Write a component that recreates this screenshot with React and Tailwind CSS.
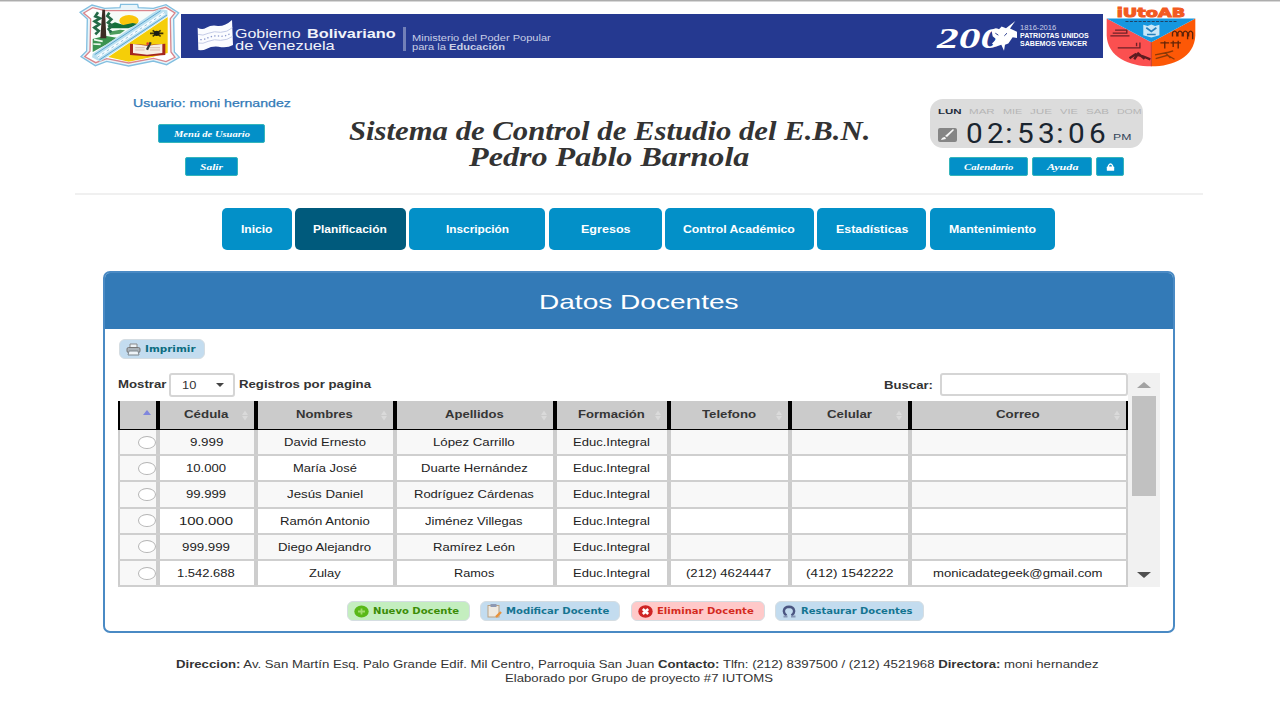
import React, { useLayoutEffect, useRef, useState } from "react";

function Fit({ w, className = "", children }) {
  const ref = useRef(null);
  const [scale, setScale] = useState(1);
  useLayoutEffect(() => {
    if (ref.current && ref.current.offsetWidth) setScale(w / ref.current.offsetWidth);
  }, [w]);
  return (
    <span className={"block shrink-0 whitespace-nowrap text-left " + className} style={{ width: w }}>
      <span ref={ref} className="inline-block origin-left" style={{ transform: `scaleX(${scale})` }}>
        {children}
      </span>
    </span>
  );
}

const Crest = () => (
  <svg className="h-[64px] w-[101px] shrink-0" viewBox="27 8 303 192" preserveAspectRatio="none">
    <path d="M30 36 L66 14 L104 24 L150 22 L152 12 L203 12 L205 22 L250 24 L288 13 L326 38 L311 56 L313 155 L328 171 L290 193 L250 182 L176 197 L110 183 L76 196 L33 169 L50 152 L52 56 Z" fill="#e9f5fa" stroke="#83bfe0" strokeWidth="4" />
    <path d="M41 38 L68 22 L105 31 L250 31 L287 21 L315 38 L301 55 L303 155 L315 171 L288 184 L250 174 L176 188 L110 175 L77 187 L44 169 L60 153 L62 56 Z" fill="#fff" stroke="#d9868c" strokeWidth="4" />
    <path d="M68 35 H268 L68 157 Z" fill="#f7fcf9" />
    <ellipse cx="177" cy="61" rx="29" ry="17" fill="#fbc60b" />
    <path d="M112 76 L135 66 L160 74 L188 68 L206 72 L175 84 L118 84 Z" fill="#14703a" />
    <path d="M68 116 L105 106 L140 112 L110 132 L68 155 Z" fill="#3b9350" />
    <path d="M116 94 L150 88 L165 90 L150 100 L120 104 Z" fill="#4d9d5c" />
    <path d="M72 118 L98 123 M70 131 L92 132" stroke="#effaf0" strokeWidth="5" />
    <path d="M84 36 L76 48 L90 54 L74 63 L88 72 L73 82 L86 92 L76 102 M118 37 L112 47 L124 57 L114 67 L126 76 L116 86 L124 96" stroke="#246a47" strokeWidth="8" fill="none" />
    <path d="M97 28 L105 28 L109 114 H91 Z" fill="#3c2b25" />
    <path d="M293 50 V158 L250 169 L176 184 L115 170 Z" fill="#f5ce08" />
    <path d="M68 160 L266 26 L292 30 L293 48 L90 184 L66 171 Z" fill="#b9dfef" />
    <path d="M74 163 L272 31 M88 179 L291 44" stroke="#5ca5d0" strokeWidth="3" />
    <path d="M82 171 L283 38" stroke="#f4fbff" strokeWidth="9" />
    <path d="M82 171 L283 38" stroke="#6aa7cb" strokeWidth="2" strokeDasharray="8 9" />
    <path d="M240 99 L280 99 M248 90 L272 108 M272 90 L248 108" stroke="#3a3108" strokeWidth="5" />
    <circle cx="260" cy="99" r="8" fill="#1b1b16" />
    <path d="M180 130 L232 134 L286 130 V164 L232 168 L180 164 Z" fill="#a4271d" />
    <path d="M189 131 L231 136 L277 131 V158 L231 163 L189 158 Z" fill="#f7efe4" />
    <path d="M196 142 H224 M196 149 H224 M240 142 H270 M240 149 H270" stroke="#cfa89b" strokeWidth="2" />
    <path d="M242 126 L231 148" stroke="#333" strokeWidth="7" />
    <circle cx="233" cy="130" r="4" fill="#e13d2f" />
  </svg>
);

const College = () => (
  <svg className="h-[62px] w-[90px] shrink-0" viewBox="620 15 268 185" preserveAspectRatio="none">
    <text x="652" y="50" textLength="204" lengthAdjust="spacingAndGlyphs" fontFamily="DejaVu Sans" fontWeight="900" fontSize="39" fill="#f25a22" stroke="#f25a22" strokeWidth="3">iUtoAB</text>
    <path d="M622 55 L755 126 V198 C690 198 624 170 622 105 Z" fill="#fb5050" />
    <path d="M886 55 L755 126 V198 C820 198 884 170 886 105 Z" fill="#fd5806" />
    <path d="M622 55 H886 L755 126 Z" fill="#1597df" />
    <path d="M755 126 V198" stroke="#c33d2c" strokeWidth="3" />
    <path d="M678 64 H830" stroke="#1e4365" strokeWidth="3" strokeDasharray="9 4" />
    <path d="M731 74 L744 78 L755 73 L766 78 L779 74 V105 L755 112 L731 105 Z" fill="#c9e7f7" />
    <path d="M740 83 L755 94 L770 83 M742 103 H768" fill="none" stroke="#2481bd" strokeWidth="5" />
    <path d="M633 107 H690 M640 99 H682 V90 H647 M655 143 H721 V127 M711 138 V128" fill="none" stroke="#6d2127" strokeWidth="4" />
    <path d="M690 174 L708 162 L730 168 L752 177 M704 177 L716 160 L735 176" fill="none" stroke="#5c1b20" strokeWidth="7" />
    <path d="M818 109 V98 Q824 88 831 98 V109 M834 109 V98 Q840 88 847 98 V109 M850 109 V98 Q856 88 863 98 V117 M866 109 V98 Q872 88 878 98 V117" fill="none" stroke="#5c2208" strokeWidth="4" />
    <path d="M782 128 H808 M795 123 V145 M812 128 H843 M820 122 V140 M835 122 V145" stroke="#642507" strokeWidth="4" />
    <path d="M766 164 L806 156 L820 152 M768 175 L803 165 L824 177 M796 157 L812 173" fill="none" stroke="#8c3907" strokeWidth="4" />
  </svg>
);

const Flag = () => (
  <svg className="h-[32px] w-[36px] shrink-0" viewBox="380 58 110 96" preserveAspectRatio="none">
    <path d="M382 84 Q396 92 408 84 Q426 74 444 79 Q466 80 487 61 L490 136 Q472 146 446 141 Q424 139 410 147 Q398 153 384 151 Z" fill="#fbfcff" />
    <path d="M383 104 Q398 110 414 101 Q434 93 452 98 Q472 98 488 84 M383 130 Q398 134 414 125 Q434 117 452 122 Q472 122 489 110" fill="none" stroke="#c3cae6" strokeWidth="3" />
    <path d="M390 120 Q404 120 414 114 Q434 106 452 110 Q468 110 483 101" fill="none" stroke="#8b98cb" strokeWidth="4" strokeDasharray="4 7" />
  </svg>
);

const Horse = () => (
  <svg className="absolute left-[54px] top-[1px] h-[31px] w-[26px]" viewBox="274 58 78 94" preserveAspectRatio="none">
    <path d="M276 91 Q284 78 298 86 L306 78 L319 83 L347 61 L331 84 L352 94 L354 113 L339 110 L326 129 L316 133 L313 151 L305 133 L288 139 L277 129 L290 116 L279 107 Z" fill="#fff" />
    <path d="M287 98 L296 104 M322 98 L314 106" stroke="#26398c" strokeWidth="3" />
  </svg>
);

const MiniButton = ({ box, w, children }) => (
  <button className={"flex h-[19px] items-center justify-center rounded-[2px] border border-[#35b5bb] bg-[#0390c8] font-['Liberation_Serif',serif] text-[9px] font-bold italic leading-[10px] text-white " + box}>
    {w ? <Fit w={w}>{children}</Fit> : children}
  </button>
);

const days = [["MAR", 26], ["MIE", 19], ["JUE", 22], ["VIE", 18], ["SAB", 23], ["DOM", 25]];

const Clock = () => (
  <div className="h-[49px] w-[213px] overflow-hidden rounded-[13px] bg-[#dcdcdc] pl-[8px] pt-[7px]">
    <div className="flex h-[11px] w-[205px] gap-[8px] text-[8px] leading-[11px]">
      <Fit w={23} className="font-bold text-[#1f2d3d]">LUN</Fit>
      {days.map(([d, w]) => (
        <Fit key={d} w={w} className="text-[#b5b5b5]">{d}</Fit>
      ))}
    </div>
    <div className="mt-[4px] flex h-[24px] items-center">
      <svg className="mt-[4px] h-[14px] w-[19px] shrink-0" viewBox="0 0 19 14">
        <rect width="19" height="14" rx="2" fill="#858585" />
        <path d="M16 2 L9 9 L7 8 L15 1 Z M7 9 L8 11 L3 12 Q4 9 7 9Z" fill="#f7f7f7" />
      </svg>
      <div className="ml-[9px] flex h-[26px] items-center font-['Roboto',sans-serif] text-[28px] leading-[33px] text-[#1a2530]">
        <Fit w={17}>0</Fit>
        <Fit w={17} className="ml-[4px]">2</Fit>
        <Fit w={8} className="ml-[1px]">:</Fit>
        <Fit w={17} className="ml-[4px]">5</Fit>
        <Fit w={17} className="ml-[4px]">3</Fit>
        <Fit w={8} className="ml-[1px]">:</Fit>
        <Fit w={17} className="ml-[4px]">0</Fit>
        <Fit w={17} className="ml-[4px]">6</Fit>
      </div>
      <Fit w={19} className="ml-[7px] mt-[7px] text-[9px] leading-[12px] text-[#34465a]">PM</Fit>
    </div>
  </div>
);

const nav = [
  ["Inicio", 31, "w-[70px]"],
  ["Planificación", 74, "w-[111px]"],
  ["Inscripción", 63, "w-[136px]"],
  ["Egresos", 49, "w-[113px]"],
  ["Control Académico", 112, "w-[149px]"],
  ["Estadísticas", 72, "w-[109px]"],
  ["Mantenimiento", 87, "w-[125px]"],
];

const heads = [["Cédula", 44], ["Nombres", 57], ["Apellidos", 59], ["Formación", 67], ["Telefono", 54], ["Celular", 45], ["Correo", 44]];

const rows = [
  [["9.999", 33], ["David Ernesto", 82], ["López Carrillo", 82], ["Educ.Integral", 77]],
  [["10.000", 40], ["María José", 64], ["Duarte Hernández", 107], ["Educ.Integral", 77]],
  [["99.999", 40], ["Jesús Daniel", 76], ["Rodríguez Cárdenas", 120], ["Educ.Integral", 77]],
  [["100.000", 54], ["Ramón Antonio", 90], ["Jiménez Villegas", 98], ["Educ.Integral", 77]],
  [["999.999", 48], ["Diego Alejandro", 93], ["Ramírez León", 82], ["Educ.Integral", 77]],
  [["1.542.688", 58], ["Zulay", 32], ["Ramos", 40], ["Educ.Integral", 77], ["(212) 4624447", 85], ["(412) 1542222", 87], ["monicadategeek@gmail.com", 170]],
];

const grid = "grid grid-cols-[42px_98px_139px_160px_114px_121px_120px_216px]";

const Sorter = () => (
  <svg className="absolute right-[5px] top-[9px] h-[11px] w-[8px]" viewBox="0 0 8 11">
    <path d="M4 0.5 L7 5 H1 Z M4 10.5 L7 6 H1 Z" fill="#dadada" />
  </svg>
);

const Table = () => (
  <div className="w-[1010px]">
    <div className={grid + " h-[29px] border-b border-black bg-[#cbcbcb]"}>
      <div className="flex justify-end border-l-2 border-r-4 border-black pr-[5px] pt-[9px]">
        <svg className="h-[5px] w-[8px]" viewBox="0 0 8 5"><path d="M4 0 L8 5 H0Z" fill="#7f86dd" /></svg>
      </div>
      {heads.map(([t, w], i) => (
        <div key={t} className={"relative flex justify-center border-black pr-[2px] pt-[6px] text-[11.5px] font-bold leading-[14px] text-[#353535] " + (i === 6 ? "border-r-2" : "border-r-4")}>
          <Fit w={w}>{t}</Fit>
          <Sorter />
        </div>
      ))}
    </div>
    {rows.map((r, n) => (
      <div key={n} className={grid + " h-[26.2px] border-b-2 border-[#cfcfcf] " + (n % 2 ? "bg-white" : "bg-[#f8f8f8]")}>
        <div className="flex items-center justify-end border-l-2 border-r-4 border-[#cdcdcd] bg-[#f8f8f8]">
          <span className="h-[13px] w-[18px] rounded-[50%] border border-[#b5b5b5] bg-white" />
        </div>
        {heads.map((h, i) => (
          <div key={h[0]} className={"flex items-center justify-center border-[#cdcdcd] pr-[2px] text-[10.5px] leading-[14px] text-[#222] " + (i === 6 ? "border-r-2" : "border-r-4")}>
            {r[i] && <Fit w={r[i][1]}>{r[i][0]}</Fit>}
          </div>
        ))}
      </div>
    ))}
  </div>
);

const icons = {
  print: (
    <svg className="h-[13px] w-[15px] shrink-0" viewBox="0 0 15 13">
      <path d="M4 5 V1 H11 V5" fill="#edf3f6" stroke="#8b8b8b" />
      <rect x="1" y="4.5" width="13" height="5" rx="1.5" fill="#aab2b8" stroke="#777" />
      <path d="M3 8 H12 L13 12 H2 Z" fill="#eef4f8" stroke="#7d868d" />
    </svg>
  ),
  add: (
    <svg className="h-[13px] w-[15px] shrink-0" viewBox="0 0 15 13" preserveAspectRatio="none">
      <ellipse cx="7.5" cy="6.5" rx="7.2" ry="6" fill="#59b817" />
      <path d="M7.5 3.5 V9.5 M4 6.5 H11" stroke="#9fdc6c" strokeWidth="1.8" />
    </svg>
  ),
  edit: (
    <svg className="h-[14px] w-[15px] shrink-0" viewBox="0 0 15 14">
      <rect x="1" y="1.5" width="11" height="11.5" fill="#eeeae2" stroke="#b9a184" />
      <rect x="3.5" y="0" width="6" height="3" fill="#8d99b3" />
      <path d="M14 8 L9 13" stroke="#e8923a" strokeWidth="2.4" />
    </svg>
  ),
  del: (
    <svg className="h-[13px] w-[15px] shrink-0" viewBox="0 0 15 13">
      <ellipse cx="7.5" cy="6.5" rx="7.2" ry="6.2" fill="#cf2424" />
      <path d="M4.8 4 L10.2 9 M10.2 4 L4.8 9" stroke="#fff" strokeWidth="2.6" />
    </svg>
  ),
  restore: (
    <svg className="h-[13px] w-[15px] shrink-0" viewBox="0 0 15 13">
      <path d="M4.5 10.5 C0.5 8 1 2 7 1.8 C13 2 13.5 8 9.5 10.5" fill="none" stroke="#4b5682" strokeWidth="2.4" />
      <path d="M1.5 11.5 H5.5 M9 11.5 H13.5" fill="none" stroke="#8696b5" strokeWidth="2" />
    </svg>
  ),
};

const Action = ({ icon, w, tone, children }) => (
  <button className={"flex h-[20px] items-center gap-[4px] rounded-[6px] border border-[#d5dde2] pl-[6px] font-['DejaVu_Sans',sans-serif] text-[9px] font-bold leading-[12px] " + tone}>
    {icons[icon]}
    <Fit w={w}>{children}</Fit>
  </button>
);

export default function App() {
  return (
    <div className="flex h-[720px] w-[1280px] flex-col overflow-hidden bg-white font-['Liberation_Sans',sans-serif]">
      <div className="h-[2px] shrink-0 border-b border-[#d8d8d8] bg-[#adadad]" />

      <header className="ml-[79px] flex h-[66px] shrink-0">
        <div className="w-[102px] pt-px"><Crest /></div>
        <div className="mt-[12px] flex h-[44px] w-[922px] bg-[#253990] text-white">
          <div className="ml-[16px] mt-[5px]"><Flag /></div>
          <div className="ml-[2px] mt-[14px] w-[161px] text-[13px] leading-[12px] text-[#f1f3fa]">
            <div className="flex gap-[7px]">
              <Fit w={65}>Gobierno</Fit>
              <Fit w={89} className="font-bold">Bolivariano</Fit>
            </div>
            <Fit w={100}>de Venezuela</Fit>
          </div>
          <div className="ml-[7px] mt-[13px] h-[24px] w-[3px] bg-[#7280b8]" />
          <div className="ml-[6px] mt-[20px] w-[141px] text-[8.5px] leading-[9px] text-[#c9cfe6]">
            <Fit w={139}>Ministerio del Poder Popular</Fit>
            <div className="flex gap-[3px]">
              <Fit w={34}>para la</Fit>
              <Fit w={56} className="font-bold">Educación</Fit>
            </div>
          </div>
          <div className="relative ml-auto mt-[5px] flex w-[83px]">
            <Fit w={66} className="mt-[3px] font-['Liberation_Serif',serif] text-[29px] font-bold italic leading-[33px]">200</Fit>
            <Horse />
          </div>
          <div className="mr-[14px] mt-[10px] font-['Liberation_Sans',sans-serif] text-[8px] leading-[8px]">
            <Fit w={36} className="text-[#c9cfe6]">1816-2016</Fit>
            <Fit w={69} className="font-bold">PATRIOTAS UNIDOS</Fit>
            <Fit w={67} className="font-bold">SABEMOS VENCER</Fit>
          </div>
        </div>
        <div className="ml-[3px] pt-[3px]"><College /></div>
      </header>

      <section className="mx-[75px] flex h-[127px] w-[1128px] shrink-0 border-b-2 border-[#f0f0f0]">
        <div className="flex w-[273px] flex-col items-center pt-[28px]">
          <Fit w={158} className="text-[11px] leading-[14px] text-[#337ab7] [-webkit-text-stroke:0.25px_#337ab7]">Usuario: moni hernandez</Fit>
          <MiniButton box="mt-[14px] w-[107px]" w={76}>Menú de Usuario</MiniButton>
          <MiniButton box="mt-[14px] w-[53px]" w={23}>Salir</MiniButton>
        </div>
        <h1 className="flex w-[523px] flex-col items-center pt-[50px] font-['Liberation_Serif',serif] text-[27px] font-bold italic leading-[26px] text-[#333]">
          <Fit w={521}>Sistema de Control de Estudio del E.B.N.</Fit>
          <Fit w={281}>Pedro Pablo Barnola</Fit>
        </h1>
        <div className="ml-[59px] pt-[31px]">
          <Clock />
          <div className="ml-[19px] mt-[9px] flex gap-[4px]">
            <MiniButton box="w-[79px]" w={50}>Calendario</MiniButton>
            <MiniButton box="w-[60px]" w={31}>Ayuda</MiniButton>
            <MiniButton box="w-[28px]">
              <svg className="h-[8px] w-[9px]" viewBox="0 0 9 8">
                <path d="M2.5 4 V2.5 Q4.5 -0.5 6.5 2.5 V4" fill="none" stroke="#fff" strokeWidth="1.3" />
                <rect x="0.8" y="3.6" width="7.4" height="4.2" rx="0.6" fill="#fff" />
              </svg>
            </MiniButton>
          </div>
        </div>
      </section>

      <nav className="ml-[221.5px] mt-[13px] flex h-[42px] shrink-0 gap-[3.35px]">
        {nav.map(([t, w, box]) => (
          <a key={t} className={"flex items-center justify-center rounded-[5px] text-[10.5px] font-bold leading-[14px] text-white " + box + (t === "Planificación" ? " bg-[#005a7c]" : " bg-[#0390c8]")}>
            <Fit w={w}>{t}</Fit>
          </a>
        ))}
      </nav>

      <main className="ml-[103px] mt-[21px] flex h-[362px] w-[1072px] shrink-0 flex-col overflow-hidden rounded-[7px] border-2 border-[#4a8ac4]">
        <div className="-mx-[2px] -mt-[2px] flex h-[58px] shrink-0 justify-center bg-[#337ab7] pr-[2px] pt-[18px] text-[21px] leading-[26px] text-white">
          <Fit w={199}>Datos Docentes</Fit>
        </div>
        <div className="ml-[14px] mt-[10px]">
          <Action icon="print" w={51} tone="w-[86px] bg-[#c3dcef] text-[#0a6c80]">Imprimir</Action>
        </div>
        <div className="ml-[13px] mt-[14px] flex h-[214px]">
          <div className="w-[1010px]">
            <div className="flex h-[28px] text-[11px] font-bold leading-[14px] text-[#333]">
              <Fit w={48} className="mt-[4px]">Mostrar</Fit>
              <div className="ml-[3px] flex h-[24px] w-[66px] items-center justify-between rounded-[3px] border-2 border-[#d5d5d5] pl-[11px] pr-[9px] font-normal">
                <Fit w={14}>10</Fit>
                <svg className="h-[4px] w-[8px]" viewBox="0 0 8 4"><path d="M0 0 H8 L4 4Z" fill="#444" /></svg>
              </div>
              <Fit w={132} className="ml-[4px] mt-[4px]">Registros por pagina</Fit>
              <Fit w={49} className="ml-auto mt-[5px]">Buscar:</Fit>
              <div className="ml-[7px] h-[23px] w-[188px] rounded-[3px] border-2 border-[#d5d5d5] bg-white" />
            </div>
            <Table />
          </div>
          <div className="flex w-[32px] flex-col items-center bg-[#f1f1f1]">
            <svg className="mt-[9px] h-[6px] w-[14px] shrink-0" viewBox="0 0 14 6"><path d="M7 0 L14 6 H0Z" fill="#a3a3a3" /></svg>
            <div className="mt-[8px] h-[100px] w-[24px] bg-[#c1c1c1]" />
            <svg className="mb-[9px] mt-auto h-[6px] w-[14px] shrink-0" viewBox="0 0 14 6"><path d="M0 0 H14 L7 6Z" fill="#505050" /></svg>
          </div>
        </div>
        <div className="ml-[241.5px] mt-[14px] flex gap-[10.5px]">
          <Action icon="add" w={86} tone="w-[123px] bg-[#c4eebf] text-[#3b8c06]">Nuevo Docente</Action>
          <Action icon="edit" w={103} tone="w-[140px] bg-[#c3dcef] text-[#147491]">Modificar Docente</Action>
          <Action icon="del" w={97} tone="w-[134px] bg-[#ffc9c9] text-[#d42a1d]">Eliminar Docente</Action>
          <Action icon="restore" w={112} tone="w-[149px] bg-[#c3dcef] text-[#147491]">Restaurar Docentes</Action>
        </div>
      </main>

      <footer className="ml-[176px] mt-[24px] flex w-[922px] flex-col text-[10.5px] leading-[14px] text-[#333]">
        <Fit w={922}>
          <b>Direccion:</b> Av. San Martín Esq. Palo Grande Edif. Mil Centro, Parroquia San Juan <b>Contacto:</b> Tlfn: (212) 8397500 / (212) 4521968 <b>Directora:</b> moni hernandez
        </Fit>
        <Fit w={268} className="ml-[329px]">Elaborado por Grupo de proyecto #7 IUTOMS</Fit>
      </footer>
    </div>
  );
}
